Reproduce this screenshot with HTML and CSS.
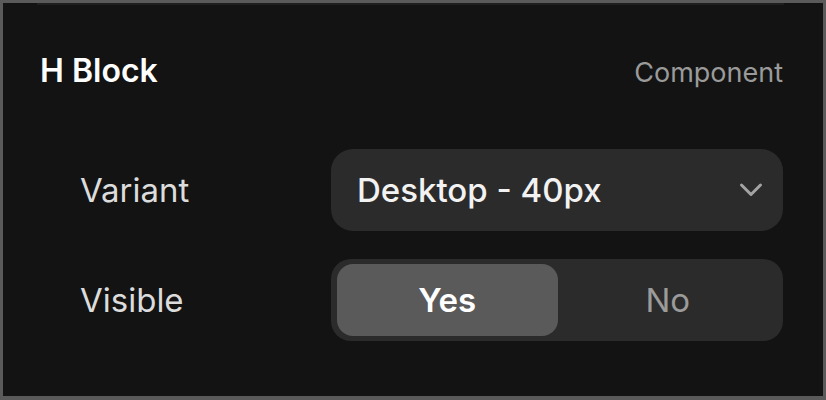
FILE: index.html
```html
<!DOCTYPE html>
<html>
<head>
<meta charset="utf-8">
<link rel="stylesheet" href="styles.css">
</head>
<body>
<div class="panel">
  <div class="topline"></div>
  <div class="header">
    <div class="title">H Block</div>
    <div class="kind">Component</div>
  </div>
  <div class="props">
    <div class="label">Variant</div>
    <div class="select">
      <span class="select-text">Desktop - 40px</span>
      <svg class="chev" width="24" height="16" viewBox="0 0 24 16"><path d="M2.5 3 L12 12.5 L21.5 3" fill="none" stroke="#a3a3a3" stroke-width="3" stroke-linecap="round" stroke-linejoin="round"/></svg>
    </div>
    <div class="label">Visible</div>
    <div class="segment">
      <div class="seg seg-on">Yes</div>
      <div class="seg">No</div>
    </div>
  </div>
</div>
</body>
</html>
```
FILE: styles.css
```css
* { box-sizing: border-box; }
html, body { margin: 0; padding: 0; background: #ffffff; }
body { font-family: Inter, "Noto Sans", sans-serif; }
.panel {
  width: 826px;
  height: 400px;
  background: #131313;
  border: 3px solid #5a5a5a;
  border-bottom-width: 4px;
  padding: 0 40px 0 37px;
  display: flex;
  flex-direction: column;
}
.topline {
  height: 2px;
  background: #1f1f1f;
  margin-left: -3px;
  margin-right: -1px;
}
.header {
  display: flex;
  justify-content: space-between;
  align-items: baseline;
  margin-top: 46px;
  line-height: 40px;
}
.title {
  color: #ffffff;
  font-size: 32px;
  font-weight: 600;
}
.kind {
  color: #9a9a9a;
  font-size: 27px;
}
.props {
  display: grid;
  grid-template-columns: 251px 452px;
  row-gap: 28px;
  align-items: center;
  margin-top: 56px;
  padding-left: 40px;
}
.label {
  color: #dcdcdc;
  font-size: 33px;
}
.select {
  height: 82px;
  border-radius: 22px;
  background: #2b2b2b;
  display: flex;
  align-items: center;
  justify-content: space-between;
  padding: 0 20px 0 26px;
}
.select-text {
  color: #f2f2f2;
  font-size: 33px;
  font-weight: 500;
}
.segment {
  height: 82px;
  border-radius: 20px;
  background: #2b2b2b;
  display: grid;
  grid-template-columns: 1fr 1fr;
  padding: 5px 5px 5px 6px;
}
.seg {
  display: flex;
  align-items: center;
  justify-content: center;
  color: #9b9b9b;
  font-size: 33px;
  font-weight: 400;
  border-radius: 16px;
}
.seg-on {
  background: #5a5a5a;
  color: #ffffff;
  font-weight: 600;
}
```
